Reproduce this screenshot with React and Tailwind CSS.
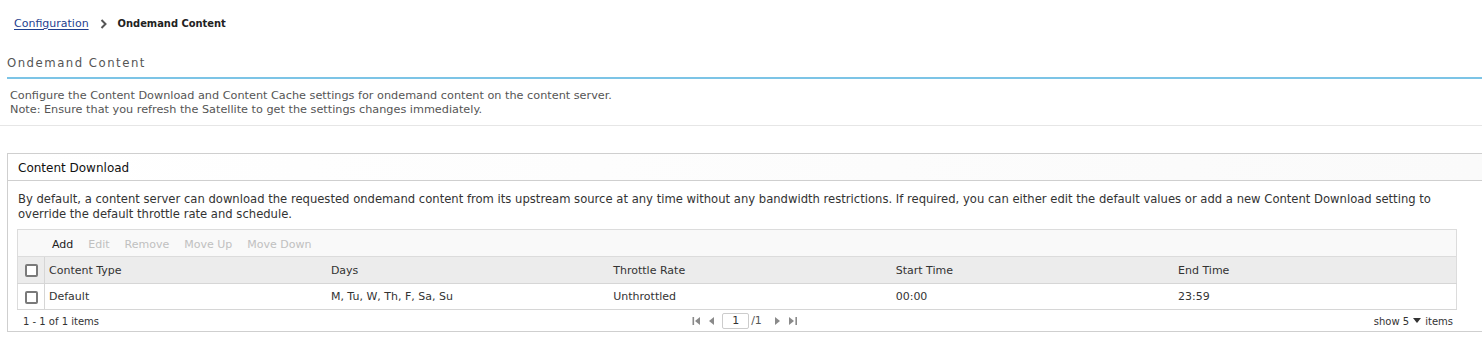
import React from "react";

const cols = ["Content Type", "Days", "Throttle Rate", "Start Time", "End Time"];
const row = ["Default", "M, Tu, W, Th, F, Sa, Su", "Unthrottled", "00:00", "23:59"];

function Box() {
  return <span className="block w-[13px] h-[13px] border-2 border-[#7a7a7a] rounded-[2px] bg-white" />;
}

export default function App() {
  return (
    <div className="w-[1482px] h-[338px] overflow-hidden bg-white text-[#333] font-['DejaVu_Sans',sans-serif]">
      {/* Breadcrumb */}
      <div className="flex items-center h-[16px] mt-[16px] pl-[14px] text-[11px]">
        <a href="#" className="text-[#1f3f8f] underline underline-offset-2">Configuration</a>
        <svg className="ml-[11px] mr-[10px]" width="8" height="10" viewBox="0 0 8 10">
          <path d="M1.5 1 L5.5 5 L1.5 9" fill="none" stroke="#555" strokeWidth="2" />
        </svg>
        <span className="font-bold text-[#222] font-['DejaVu_Sans_Condensed',sans-serif]">Ondemand Content</span>
      </div>

      {/* Title */}
      <div className="mt-[22px] ml-[7px] border-b-2 border-[#7cc4e6] pb-[5px]">
        <h1 className="text-[13px] leading-[18px] tracking-[1.5px] text-[#555] font-['DejaVu_Sans_Condensed',sans-serif]">Ondemand Content</h1>
      </div>

      <div className="px-[10px] pt-[10px] pb-[8px] text-[11.25px] leading-[14px] text-[#555] border-b border-[#e6e6e6]">
        <p>Configure the Content Download and Content Cache settings for ondemand content on the content server.</p>
        <p>Note: Ensure that you refresh the Satellite to get the settings changes immediately.</p>
      </div>

      {/* Panel */}
      <div className="mt-[27px] ml-[7px] border border-r-0 border-[#cfcfcf]">
        <div className="h-[27px] flex items-center pl-[10px] pt-[1px] text-[12px] text-[#111] bg-gradient-to-r from-white to-[#fafafa] border-b border-[#cfcfcf]">
          Content Download
        </div>
        <p className="px-[10px] pt-[11px] text-[11.6px] leading-[15px] text-[#333]">
          By default, a content server can download the requested ondemand content from its upstream source at any time without any bandwidth restrictions. If required, you can either edit the default values or add a new Content Download setting to override the default throttle rate and schedule.
        </p>

        <div className="mt-[7px] ml-[9px] w-[1440px]">
          <div className="h-[28px] flex items-center gap-[15px] pl-[34px] pt-[4px] text-[11px] bg-[#f9f9f9] border border-[#dcdcdc]">
            <span className="text-[#222]">Add</span>
            <span className="text-[#c0c0c0]">Edit</span>
            <span className="text-[#c0c0c0]">Remove</span>
            <span className="text-[#c0c0c0]">Move Up</span>
            <span className="text-[#c0c0c0]">Move Down</span>
          </div>
          <table className="w-full table-fixed border-collapse text-[11px] border-x border-[#dcdcdc]">
            <colgroup>
              <col className="w-[27px]" />
              <col />
              <col />
              <col />
              <col />
              <col />
            </colgroup>
            <thead>
              <tr className="h-[26px] bg-[#ececec] text-[#333] border-b border-[#d6d6d6]">
                <th className="border-r border-[#d6d6d6] pl-[7px] pt-[1px]"><Box /></th>
                {cols.map((c) => (
                  <th key={c} className="text-left font-normal pl-[4px] pt-[2px]">{c}</th>
                ))}
              </tr>
            </thead>
            <tbody>
              <tr className="h-[26px] border-b border-[#d6d6d6]">
                <td className="border-r border-[#d6d6d6] pl-[7px] pt-[2px]"><Box /></td>
                {row.map((c) => (
                  <td key={c} className="pl-[4px] pt-[3px] text-[#333]">{c}</td>
                ))}
              </tr>
            </tbody>
          </table>
          <div className="h-[21px] flex items-center justify-between pl-[6px] pr-[4px] pt-[2px] text-[10px] text-[#333]">
            <span className="w-[214px]">1 - 1 of 1 items</span>
            <div className="flex items-center text-[#999]">
              <svg width="10" height="10" viewBox="0 0 10 10" className="mr-[6px]"><rect x="0.5" y="1" width="1.6" height="8" fill="#8a8a8a" /><path d="M8 1 L3 5 L8 9 Z" fill="#8a8a8a" /></svg>
              <svg width="7" height="10" viewBox="0 0 7 10" className="mr-[7px]"><path d="M6 1 L1 5 L6 9 Z" fill="#8a8a8a" /></svg>
              <span className="w-[27px] h-[16px] border border-[#ccc] rounded-[2px] flex items-center justify-center text-[#333] text-[11px]">1</span>
              <span className="ml-[2px] mr-[12px] text-[#555] text-[11px]">/1</span>
              <svg width="7" height="10" viewBox="0 0 7 10" className="mr-[7px]"><path d="M1 1 L6 5 L1 9 Z" fill="#8a8a8a" /></svg>
              <svg width="10" height="10" viewBox="0 0 10 10"><path d="M1 1 L6 5 L1 9 Z" fill="#8a8a8a" /><rect x="7.4" y="1" width="1.6" height="8" fill="#8a8a8a" /></svg>
            </div>
            <span className="w-[200px] flex items-center justify-end gap-[4px] text-[#333]">
              show 5
              <svg width="8" height="6" viewBox="0 0 8 6"><path d="M0 0 L8 0 L4 5 Z" fill="#333" /></svg>
              items
            </span>
          </div>
        </div>
      </div>
    </div>
  );
}
